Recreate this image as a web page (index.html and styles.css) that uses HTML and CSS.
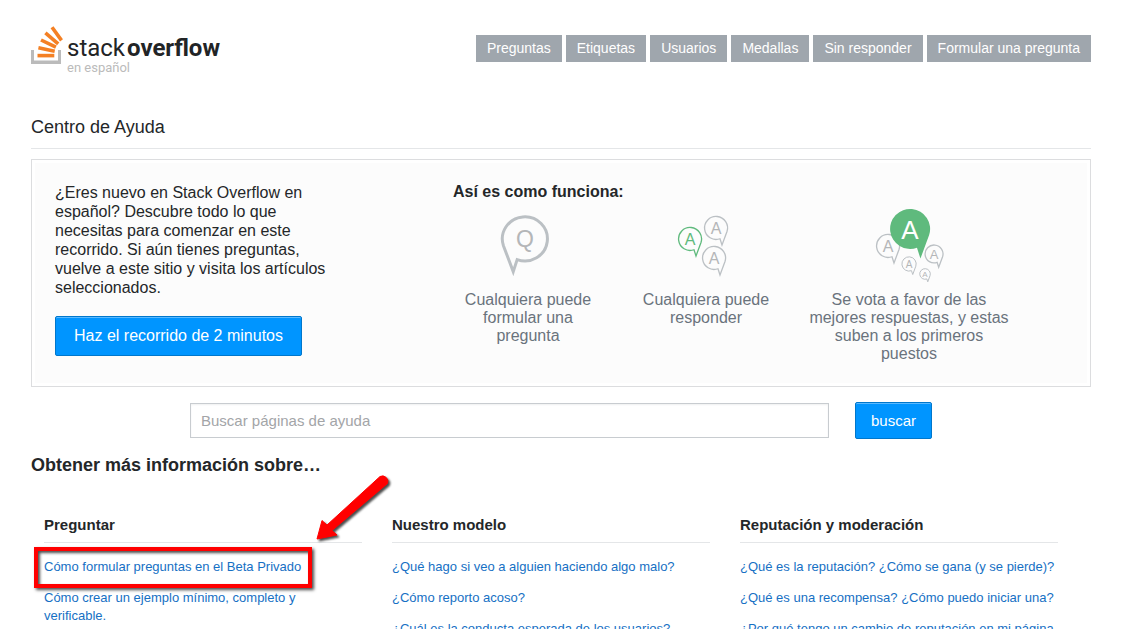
FILE: index.html
```html
<!DOCTYPE html>
<html lang="es">
<head>
<meta charset="utf-8">
<title>Centro de Ayuda - Stack Overflow en español</title>
<link rel="stylesheet" href="styles.css">
</head>
<body>
<header class="site-header">
  <a class="logo" href="#">
    <svg class="logo-mark" width="32" height="40" viewBox="0 0 32 40" aria-hidden="true">
      <path d="M0 24h3v10.500h24v-10.500h3v14h-30z" fill="#bbb"/>
      <g stroke="#f48024" stroke-width="3.6">
        <path d="M6.5 29.6H23.3"/>
        <path d="M7.4 21.8L23.7 25.2"/>
        <path d="M10 14L24.9 21.2"/>
        <path d="M14.4 6.8L27.2 17.8"/>
        <path d="M21 1.2L30.5 14.4"/>
      </g>
    </svg>
    <span class="logo-text">
      <span class="logo-name"><span class="logo-stack">stack</span><span class="logo-overflow">overflow</span></span>
      <span class="logo-lang">en español</span>
    </span>
  </a>
  <nav class="main-nav">
    <a href="#">Preguntas</a>
    <a href="#">Etiquetas</a>
    <a href="#">Usuarios</a>
    <a href="#">Medallas</a>
    <a href="#">Sin responder</a>
    <a href="#">Formular una pregunta</a>
  </nav>
</header>
<main class="content">
  <h1 class="page-title">Centro de Ayuda</h1>

  <section class="intro">
    <div class="intro-text">
      <p>¿Eres nuevo en Stack Overflow en español? Descubre todo lo que necesitas para comenzar en este recorrido. Si aún tienes preguntas, vuelve a este sitio y visita los artículos seleccionados.</p>
      <a class="button tour-button" href="#">Haz el recorrido de 2 minutos</a>
    </div>
    <div class="how">
      <h2 class="how-title">Así es como funciona:</h2>
      <div class="steps">
        <div class="step">
          <svg width="80" height="76" viewBox="0 0 80 76" aria-hidden="true">
            <defs>
              <path id="bubble" d="M8 21.5A23 23 0 1 1 22 7L12 34Z" vector-effect="non-scaling-stroke"/>
            </defs>
            <use href="#bubble" class="outline thick" transform="translate(37 32) scale(-.98 .96)"/>
            <text class="letter" x="37" y="40" font-size="23">Q</text>
          </svg>
          <p>Cualquiera puede formular una pregunta</p>
        </div>
        <div class="step">
          <svg width="80" height="76" viewBox="0 0 80 76" aria-hidden="true">
            <use href="#bubble" class="outline" transform="translate(50 21) scale(.5)"/>
            <text class="letter" x="50" y="27" font-size="16">A</text>
            <use href="#bubble" class="outline green" transform="translate(24 32) scale(.5)"/>
            <text class="letter green-letter" x="24" y="38" font-size="16">A</text>
            <use href="#bubble" class="outline" transform="translate(48 51) scale(.5)"/>
            <text class="letter" x="48" y="57" font-size="16">A</text>
          </svg>
          <p>Cualquiera puede responder</p>
        </div>
        <div class="step">
          <svg width="80" height="76" viewBox="0 0 80 76" aria-hidden="true">
            <use href="#bubble" class="outline" transform="translate(19 39) scale(.5)"/>
            <text class="letter" x="19" y="45" font-size="16">A</text>
            <use href="#bubble" class="outline" transform="translate(65 47) scale(.39)"/>
            <text class="letter" x="65" y="52" font-size="13">A</text>
            <use href="#bubble" class="outline thin" transform="translate(40 57) scale(.31)"/>
            <text class="letter" x="40" y="61" font-size="10">A</text>
            <use href="#bubble" class="outline thin" transform="translate(56 67) scale(.23)"/>
            <text class="letter" x="56" y="70" font-size="8">A</text>
            <use href="#bubble" fill="#5fba7d" transform="translate(41 22) scale(.87)"/>
            <text class="letter white-letter" x="41" y="32" font-size="26">A</text>
          </svg>
          <p>Se vota a favor de las mejores respuestas, y estas suben a los primeros puestos</p>
        </div>
      </div>
    </div>
  </section>

  <form class="search">
    <input type="text" placeholder="Buscar páginas de ayuda" aria-label="Buscar páginas de ayuda">
    <button class="button" type="button">buscar</button>
  </form>

  <h2 class="topics-title">Obtener más información sobre…</h2>
  <div class="topics">
    <section class="topic">
      <h3>Preguntar</h3>
      <ul>
        <li class="marked"><a href="#">Cómo formular preguntas en el Beta Privado</a></li>
        <li><a href="#">Cómo crear un ejemplo mínimo, completo y verificable.</a></li>
      </ul>
      <svg class="arrow" width="80" height="74" viewBox="0 0 80 74" aria-hidden="true">
        <path d="M2 67L7 48.500L12 53L65 4.500A5.500 5.500 0 0 1 72.500 11.500L17 58.500L22 63Z" fill="#f00" stroke="#f00" stroke-linejoin="round"/>
      </svg>
    </section>
    <section class="topic">
      <h3>Nuestro modelo</h3>
      <ul>
        <li><a href="#">¿Qué hago si veo a alguien haciendo algo malo?</a></li>
        <li><a href="#">¿Cómo reporto acoso?</a></li>
        <li><a href="#">¿Cuál es la conducta esperada de los usuarios?</a></li>
      </ul>
    </section>
    <section class="topic">
      <h3>Reputación y moderación</h3>
      <ul>
        <li><a href="#">¿Qué es la reputación? ¿Cómo se gana (y se pierde)?</a></li>
        <li><a href="#">¿Qué es una recompensa? ¿Cómo puedo iniciar una?</a></li>
        <li><a href="#">¿Por qué tengo un cambio de reputación en mi página</a></li>
      </ul>
    </section>
  </div>
</main>
</body>
</html>
```
FILE: styles.css
```css
*,
*::before,
*::after {
  box-sizing: border-box;
}

html {
  overflow: hidden;
}

body {
  margin: 0;
  padding: 0 30px 0 31px;
  background: #fff;
  color: #242729;
  font-family: "Liberation Sans", Arial, sans-serif;
  font-size: 16px;
}

h1, h2, h3, p, ul {
  margin: 0;
  padding: 0;
}

a {
  color: #1670c4;
  text-decoration: none;
}

/* Header */
.site-header {
  display: flex;
  justify-content: space-between;
  align-items: flex-start;
  height: 50px;
  margin-top: 26px;
}

.logo {
  display: flex;
  gap: 4px;
}

.logo-text {
  display: flex;
  flex-direction: column;
  padding-top: 8px;
}

.logo-name {
  display: flex;
  gap: 2px;
  color: #222426;
  font-family: Roboto, sans-serif;
  font-size: 24px;
  line-height: 28px;
}

.logo-stack {
  font-weight: 400;
}

.logo-overflow {
  font-weight: 700;
}

.logo-lang {
  color: #bbb;
  font-family: Roboto, sans-serif;
  font-size: 13px;
  line-height: 12px;
}

.main-nav {
  display: flex;
  gap: 4px;
  padding-top: 9px;
}

.main-nav a {
  height: 27px;
  padding: 0 11px;
  background: #9fa6ad;
  color: #fff;
  font-size: 14px;
  line-height: 26px;
}

/* Page title */
.page-title {
  margin-top: 39px;
  padding-bottom: 9px;
  border-bottom: 1px solid #e4e6e8;
  font-size: 18px;
  font-weight: 400;
  line-height: 24px;
}

/* Introduction */
.intro {
  display: flex;
  gap: 118px;
  margin-top: 10px;
  padding: 20px 20px 23px;
  border: 1px solid #dcdddf;
  background: #fcfcfc;
  box-shadow: inset 0 0 0 3px #fff;
}

.intro-text {
  width: 280px;
  margin-left: 3px;
  padding-top: 3px;
  line-height: 19px;
}

.button {
  border: 1px solid #0077cc;
  border-radius: 2px;
  background: #0095ff;
  box-shadow: inset 0 1px 0 #5ab9ff;
  color: #fff;
  font-family: inherit;
}

.tour-button {
  display: inline-block;
  margin-top: 19px;
  padding: 0 18px;
  line-height: 38px;
}

.how-title {
  font-size: 16px;
  line-height: 24px;
}

.steps {
  display: grid;
  grid-template-columns: 150px 150px 200px;
  gap: 28px;
  margin-top: 3px;
}

.step {
  display: flex;
  flex-direction: column;
  align-items: center;
  gap: 8px;
  color: #6a737c;
  line-height: 18px;
  text-align: center;
}

.outline {
  fill: #fcfcfc;
  stroke: #bbc0c4;
  stroke-width: 1.3px;
}

.thick {
  stroke-width: 3px;
}

.thin {
  stroke-width: 1px;
}

.green {
  stroke: #5fba7d;
}

.letter {
  fill: #b4b6b8;
  font-family: "Liberation Sans", Arial, sans-serif;
  text-anchor: middle;
}

.green-letter {
  fill: #5fba7d;
}

.white-letter {
  fill: #fff;
}

/* Search */
.search {
  display: flex;
  align-items: center;
  gap: 26px;
  margin-top: 15px;
  padding: 0 159px;
}

.search input {
  flex: 1;
  min-width: 0;
  height: 35px;
  padding: 0 10px;
  border: 1px solid #c8ccd0;
  border-radius: 0;
  box-shadow: inset 0 1px 2px #eff0f1;
  font-family: inherit;
  font-size: 15px;
}

.search input::placeholder {
  color: #a3a5a8;
}

.search .button {
  height: 37px;
  padding: 0 15px;
  font-size: 15px;
}

/* Topics */
.topics-title {
  margin-top: 14px;
  font-size: 18px;
  line-height: 24px;
}

.topics {
  display: grid;
  grid-template-columns: repeat(3, 1fr);
  gap: 30px;
  margin-top: 37px;
  padding: 0 33px 0 13px;
}

.topic {
  position: relative;
}

.topic h3 {
  padding-bottom: 7px;
  border-bottom: 1px solid #e4e6e8;
  font-size: 15px;
  line-height: 21px;
}

.topic ul {
  display: flex;
  flex-direction: column;
  gap: 13px;
  padding: 15px 2px 0 0;
  list-style: none;
  font-size: 13px;
  line-height: 18px;
}

.marked {
  position: relative;
}

.marked::after {
  content: "";
  position: absolute;
  top: -11px;
  left: -10px;
  width: 278px;
  height: 41px;
  border: 4px solid #f00;
  box-shadow: 2px 2px 3px rgba(0, 0, 0, 0.7), inset 2px 2px 3px rgba(0, 0, 0, 0.7);
  pointer-events: none;
}

.arrow {
  position: absolute;
  top: -42px;
  left: 271px;
  overflow: visible;
  filter: drop-shadow(2px 2px 1px rgba(0, 0, 0, 0.7));
}
```
